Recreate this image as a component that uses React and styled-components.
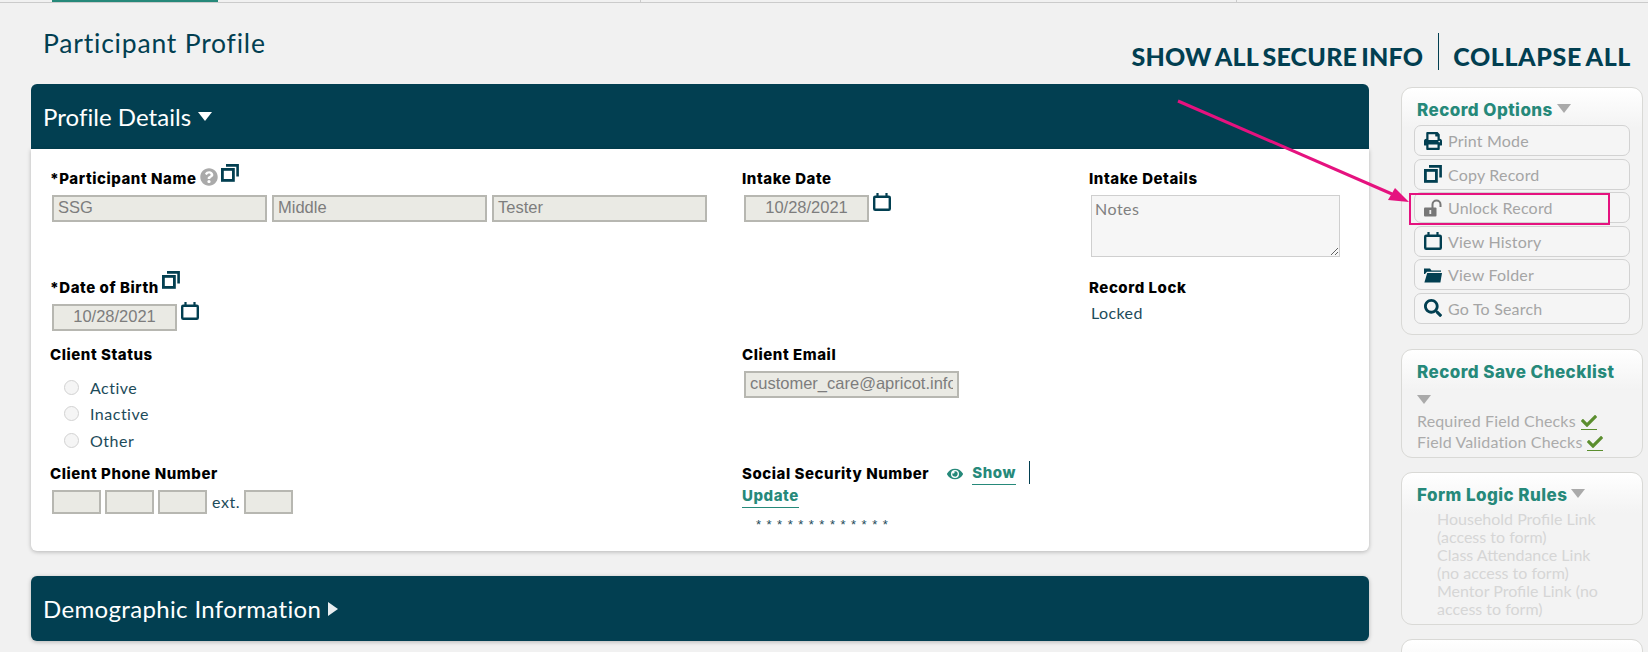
import React from 'react';
import styled, { createGlobalStyle } from 'styled-components';
import { FaPrint, FaSearch, FaEye, FaCheck, FaQuestionCircle } from 'react-icons/fa';

const navy = '#023f51';
const teal = '#26897a';
const boldFont = '"Inter", "Liberation Sans", sans-serif';

const GlobalStyle = createGlobalStyle`
    html, body {
        margin: 0;
        padding: 0;
        height: 652px;
        overflow: hidden;
        background: #f1f1f1;
        font-family: "Lato", "Liberation Sans", sans-serif;
    }
`
const Page = styled.div`
    position: relative;
    width: 1648px;
    height: 652px;
    overflow: hidden;
    background: #f1f1f1;
`
const TabBar = styled.div`
    display: flex;
    height: 2px;
    border-bottom: 1px solid #cbcbcb;
    padding-left: 52px;
`
const Tab = styled.div`
    width: ${props => props.w}px;
    background: ${props => props.active ? teal : 'transparent'};
    border-right: ${props => props.active ? 'none' : '1px solid #cbcbcb'};
`
const Header = styled.div`
    display: flex;
    justify-content: space-between;
    height: 81px;
    padding: 0 17px 0 43px;
    box-sizing: border-box;
`
const Title = styled.h1`
    margin: 25px 0 0;
    font-size: 26.5px;
    line-height: 30px;
    font-weight: 400;
    color: ${navy};
    letter-spacing: 0.8px;
`
const Actions = styled.div`
    display: flex;
    margin-top: 30px;
    height: 37px;
`
const Action = styled.div`
    padding-top: 9px;
    font-size: 25px;
    line-height: 28px;
    font-weight: 900;
    color: ${navy};
    letter-spacing: ${props => props.first ? '0.2px' : '0.6px'};
    word-spacing: -2px;
    padding-right: ${props => props.first ? '15px' : '0'};
    padding-left: ${props => props.first ? '0' : '14px'};
    border-right: ${props => props.first ? `1px solid ${navy}` : 'none'};
`
const Content = styled.div`
    display: flex;
    align-items: flex-start;
    padding-left: 31px;
    gap: 32px;
`
const Main = styled.div`
    width: 1338px;
    flex: none;
`
const Panel = styled.section`
    margin-bottom: 25px;
`
const PanelHead = styled.div`
    display: flex;
    align-items: center;
    gap: 7px;
    height: 65px;
    padding-left: 12px;
    background: ${navy};
    border-radius: ${props => props.open ? '6px 6px 0 0' : '6px'};
    color: #fff;
    font-size: 24px;
    letter-spacing: ${props => props.open ? '0.05px' : '0.35px'};
    box-shadow: ${props => props.open ? 'none' : '0 1px 4px rgba(0,0,0,.25)'};
`
const Caret = styled.span`
    display: inline-block;
    width: 0;
    height: 0;
    border-left: 7px solid transparent;
    border-right: 7px solid transparent;
    border-top: 9px solid ${props => props.color || '#fff'};
`
const CaretRight = styled.span`
    display: inline-block;
    width: 0;
    height: 0;
    border-top: 7px solid transparent;
    border-bottom: 7px solid transparent;
    border-left: 10px solid #e8eef0;
`
const PanelBody = styled.div`
    display: grid;
    grid-template-columns: 692px 347px 1fr;
    grid-template-rows: 109px 67px 119px 1fr;
    height: 402px;
    box-sizing: border-box;
    padding: 19px 0 0 19px;
    background: #fff;
    border-radius: 0 0 6px 6px;
    box-shadow: 0 1px 4px rgba(0,0,0,.25);
`
const Field = styled.div`
    min-width: 0;
`
const Label = styled.div`
    display: flex;
    align-items: flex-start;
    height: 25px;
    font-family: ${boldFont};
    font-size: 15px;
    line-height: 22px;
    font-weight: 800;
    letter-spacing: 0.55px;
    color: #000;
    white-space: nowrap;
`
const UpdateRow = styled(Label)`
    margin-top: -2px;
`
const Inputs = styled.div`
    display: flex;
    align-items: flex-start;
    gap: ${props => props.gap || 5}px;
    margin: 2px 0 0 2px;
`
const Input = styled.div`
    width: ${props => props.w}px;
    height: ${props => props.h || 27}px;
    box-sizing: border-box;
    flex: none;
    padding: 0 4px;
    background: #eaeae4;
    border: 2px solid #b7b7b1;
    font-family: "Liberation Sans", Arial, sans-serif;
    font-size: 16.5px;
    line-height: 21px;
    color: #7d7d7d;
    white-space: nowrap;
    text-align: ${props => props.center ? 'center' : 'left'};
`
const InputText = styled.span`
    display: block;
    overflow: hidden;
`
const Notes = styled.textarea`
    display: block;
    width: 249px;
    height: 62px;
    margin: 2px 0 0 2px;
    box-sizing: border-box;
    padding: 3px;
    background: #f6f6f6;
    border: 1px solid #cfcfcf;
    font-family: "Lato", "Liberation Sans", sans-serif;
    font-size: 16px;
    letter-spacing: 0.5px;
    color: #808080;
    outline: none;
`
const Value = styled.div`
    margin: 1px 0 0 2px;
    font-size: 16px;
    color: #1d4b5a;
    letter-spacing: 0.4px;
`
const Radios = styled.div`
    display: grid;
    grid-auto-rows: 26.5px;
    margin: 5px 0 0 14px;
`
const RadioRow = styled.div`
    display: flex;
    align-items: center;
    gap: 11px;
    font-size: 16px;
    letter-spacing: 0.5px;
    color: #1d4b5a;
`
const Radio = styled.span`
    width: 15px;
    height: 15px;
    box-sizing: border-box;
    border: 1px solid #d2d2d2;
    border-radius: 50%;
    background: #f5f5f5;
`
const Ext = styled.span`
    font-size: 16px;
    line-height: 24px;
    letter-spacing: 0.6px;
    color: #1d4b5a;
    margin: 0 0 0 1px;
`
const LinkText = styled.a`
    font-family: ${boldFont};
    color: ${teal};
    font-weight: 800;
    font-size: 15px;
    letter-spacing: 0.55px;
    border-bottom: 1px solid ${teal};
    line-height: 20px;
    height: 21px;
`
const Eye = styled(FaEye)`
    color: ${teal};
    font-size: 16px;
    margin: 3px 9px 0 18px;
`
const Divider = styled.span`
    width: 1px;
    height: 23px;
    margin: -2px 0 0 13px;
    background: ${navy};
`
const Stars = styled.div`
    margin: 6px 0 0 14px;
    font-family: "Liberation Sans", Arial, sans-serif;
    font-size: 13px;
    letter-spacing: 5.5px;
    color: #1d4b5a;
`
const Side = styled.aside`
    width: 242px;
    flex: none;
    margin-top: 3px;
    display: flex;
    flex-direction: column;
    gap: 14px;
`
const Card = styled.div`
    height: ${props => props.h}px;
    box-sizing: border-box;
    padding: 11px 12px 0 15px;
    background: linear-gradient(#ffffff, #f3f3f3 40px);
    border: 1px solid #d9d9d6;
    border-radius: 11px;
    flex: none;
`
const CardTitle = styled.div`
    font-family: ${boldFont};
    font-size: 17px;
    line-height: 22px;
    font-weight: 800;
    letter-spacing: 0.45px;
    color: ${teal};
    white-space: nowrap;
    & > span { margin-left: 4px; vertical-align: 3px; }
`
const CaretLine = styled.div`
    line-height: 16px;
    margin: 7px 0 4px;
`
const OptionList = styled.div`
    display: flex;
    flex-direction: column;
    gap: 2.6px;
    margin: 4px 0 0 -3px;
`
const Option = styled.div`
    display: flex;
    align-items: center;
    gap: 6px;
    height: 31px;
    box-sizing: border-box;
    padding-left: 9px;
    background: #f5f5f5;
    border: 1px solid #d2d2d2;
    border-radius: 7px;
    font-size: 16px;
    color: #a5a5a5;
    letter-spacing: 0.2px;
    & svg { width: 18px; height: 18px; flex: none; color: ${navy}; }
`
const CheckRow = styled.div`
    font-size: 16px;
    line-height: 21px;
    letter-spacing: 0.15px;
    color: #ababab;
    white-space: nowrap;
`
const Checked = styled.span`
    display: inline-flex;
    margin-left: 5px;
    border-bottom: 1px solid #5b8e2e;
    color: #5b8e2e;
    font-size: 16px;
    vertical-align: -2px;
`
const RuleList = styled.div`
    margin: 4px 0 0 20px;
    font-size: 16px;
    line-height: 18px;
    color: #d6d6d6;
`
const Highlight = styled.div`
    position: absolute;
    left: 1409px;
    top: 193px;
    width: 201px;
    height: 32px;
    box-sizing: border-box;
    border: 2px solid #e5127f;
`
const ArrowOverlay = styled.svg`
    position: absolute;
    left: 0;
    top: 0;
    pointer-events: none;
`
const IconWrap = styled.span`
    display: inline-flex;
    flex: none;
    margin: ${props => props.m || '0'};
    color: ${navy};
`

const CopyIcon = ({ size = 18 }) => (
    <svg width={size} height={size} viewBox="0 0 18 18" fill="none" stroke={navy} strokeWidth="2.8">
        <rect x="1.4" y="5.4" width="11" height="11" />
        <path d="M5 1.4h11.6V12.5" strokeWidth="2.6" />
    </svg>
);

const CalendarIcon = ({ size = 18 }) => (
    <svg width={size} height={size} viewBox="0 0 18 18" fill="none" stroke={navy}>
        <rect x="1.2" y="3.8" width="15.6" height="13" rx="1" strokeWidth="2.4" />
        <path d="M4.5 0v4.5M13.5 0v4.5" strokeWidth="2.2" />
    </svg>
);

const UnlockIcon = () => (
    <svg viewBox="0 0 18 18">
        <path d="M8.5 9V5.5a4 4 0 0 1 8 0V8" fill="none" stroke="#777" strokeWidth="2" />
        <rect x="0" y="8.5" width="12.5" height="9" rx="1" fill="#777" />
        <rect x="5.4" y="11" width="1.8" height="4" fill="#eee" />
    </svg>
);

const FolderIcon = () => (
    <svg viewBox="0 0 18 18" fill={navy}>
        <path d="M0 2.5h6l1.5 2H17v1.2H3L1 8 0 8z" />
        <path d="M3.2 7H18l-1.6 9.5H0.4z" />
    </svg>
);

const options = [
    { label: 'Print Mode', icon: <FaPrint /> },
    { label: 'Copy Record', icon: <CopyIcon /> },
    { label: 'Unlock Record', icon: <UnlockIcon /> },
    { label: 'View History', icon: <CalendarIcon /> },
    { label: 'View Folder', icon: <FolderIcon /> },
    { label: 'Go To Search', icon: <FaSearch /> },
];

const App = () => {
    return (
        <Page>
            <GlobalStyle />
            <TabBar>
                <Tab w={166} active />
                <Tab w={422} />
                <Tab w={595} />
            </TabBar>
            <Header>
                <Title>Participant Profile</Title>
                <Actions>
                    <Action first>SHOW ALL SECURE INFO</Action>
                    <Action>COLLAPSE ALL</Action>
                </Actions>
            </Header>
            <Content>
                <Main>
                    <Panel>
                        <PanelHead open>Profile Details <Caret /></PanelHead>
                        <PanelBody>
                            <Field>
                                <Label>
                                    *Participant Name
                                    <IconWrap m="0 3px 0 3px"><FaQuestionCircle size={18} color="#aaa" /></IconWrap>
                                    <IconWrap m="-4px 0 0 0"><CopyIcon /></IconWrap>
                                </Label>
                                <Inputs>
                                    <Input w={215}>SSG</Input>
                                    <Input w={215}>Middle</Input>
                                    <Input w={215}>Tester</Input>
                                </Inputs>
                            </Field>
                            <Field>
                                <Label>Intake Date</Label>
                                <Inputs gap={4}>
                                    <Input w={125} center>10/28/2021</Input>
                                    <IconWrap m="-2px 0 0 0"><CalendarIcon /></IconWrap>
                                </Inputs>
                            </Field>
                            <Field>
                                <Label>Intake Details</Label>
                                <Notes readOnly defaultValue="Notes" />
                            </Field>

                            <Field>
                                <Label>
                                    *Date of Birth
                                    <IconWrap m="-6px 0 0 3px"><CopyIcon /></IconWrap>
                                </Label>
                                <Inputs gap={4}>
                                    <Input w={125} center>10/28/2021</Input>
                                    <IconWrap m="-2px 0 0 0"><CalendarIcon /></IconWrap>
                                </Inputs>
                            </Field>
                            <Field />
                            <Field>
                                <Label>Record Lock</Label>
                                <Value>Locked</Value>
                            </Field>

                            <Field>
                                <Label>Client Status</Label>
                                <Radios>
                                    <RadioRow><Radio />Active</RadioRow>
                                    <RadioRow><Radio />Inactive</RadioRow>
                                    <RadioRow><Radio />Other</RadioRow>
                                </Radios>
                            </Field>
                            <Field>
                                <Label>Client Email</Label>
                                <Inputs>
                                    <Input w={215}><InputText>customer_care@apricot.info</InputText></Input>
                                </Inputs>
                            </Field>
                            <Field />

                            <Field>
                                <Label>Client Phone Number</Label>
                                <Inputs gap={4}>
                                    <Input w={49} h={24} />
                                    <Input w={49} h={24} />
                                    <Input w={49} h={24} />
                                    <Ext>ext.</Ext>
                                    <Input w={49} h={24} />
                                </Inputs>
                            </Field>
                            <Field>
                                <Label>
                                    Social Security Number
                                    <Eye />
                                    <LinkText>Show</LinkText>
                                    <Divider />
                                </Label>
                                <UpdateRow><LinkText>Update</LinkText></UpdateRow>
                                <Stars>*************</Stars>
                            </Field>
                            <Field />
                        </PanelBody>
                    </Panel>
                    <Panel>
                        <PanelHead>Demographic Information <CaretRight /></PanelHead>
                    </Panel>
                </Main>
                <Side>
                    <Card h={248}>
                        <CardTitle>Record Options<Caret color="#aaa" /></CardTitle>
                        <OptionList>
                            {options.map((item) => (
                                <Option key={item.label}>{item.icon}{item.label}</Option>
                            ))}
                        </OptionList>
                    </Card>
                    <Card h={109}>
                        <CardTitle>Record Save Checklist</CardTitle>
                        <CaretLine><Caret color="#aaa" /></CaretLine>
                        <CheckRow>Required Field Checks<Checked><FaCheck /></Checked></CheckRow>
                        <CheckRow>Field Validation Checks<Checked><FaCheck /></Checked></CheckRow>
                    </Card>
                    <Card h={153}>
                        <CardTitle>Form Logic Rules<Caret color="#aaa" /></CardTitle>
                        <RuleList>
                            <div>Household Profile Link<br />(access to form)</div>
                            <div>Class Attendance Link<br />(no access to form)</div>
                            <div>Mentor Profile Link (no<br />access to form)</div>
                        </RuleList>
                    </Card>
                    <Card h={40} />
                </Side>
            </Content>
            <Highlight />
            <ArrowOverlay width="1648" height="652">
                <line x1="1178" y1="101" x2="1392" y2="194" stroke="#e5127f" strokeWidth="3" />
                <polygon points="1409,202 1388,200 1395,188" fill="#e5127f" />
            </ArrowOverlay>
        </Page>
    )
}

export default App
